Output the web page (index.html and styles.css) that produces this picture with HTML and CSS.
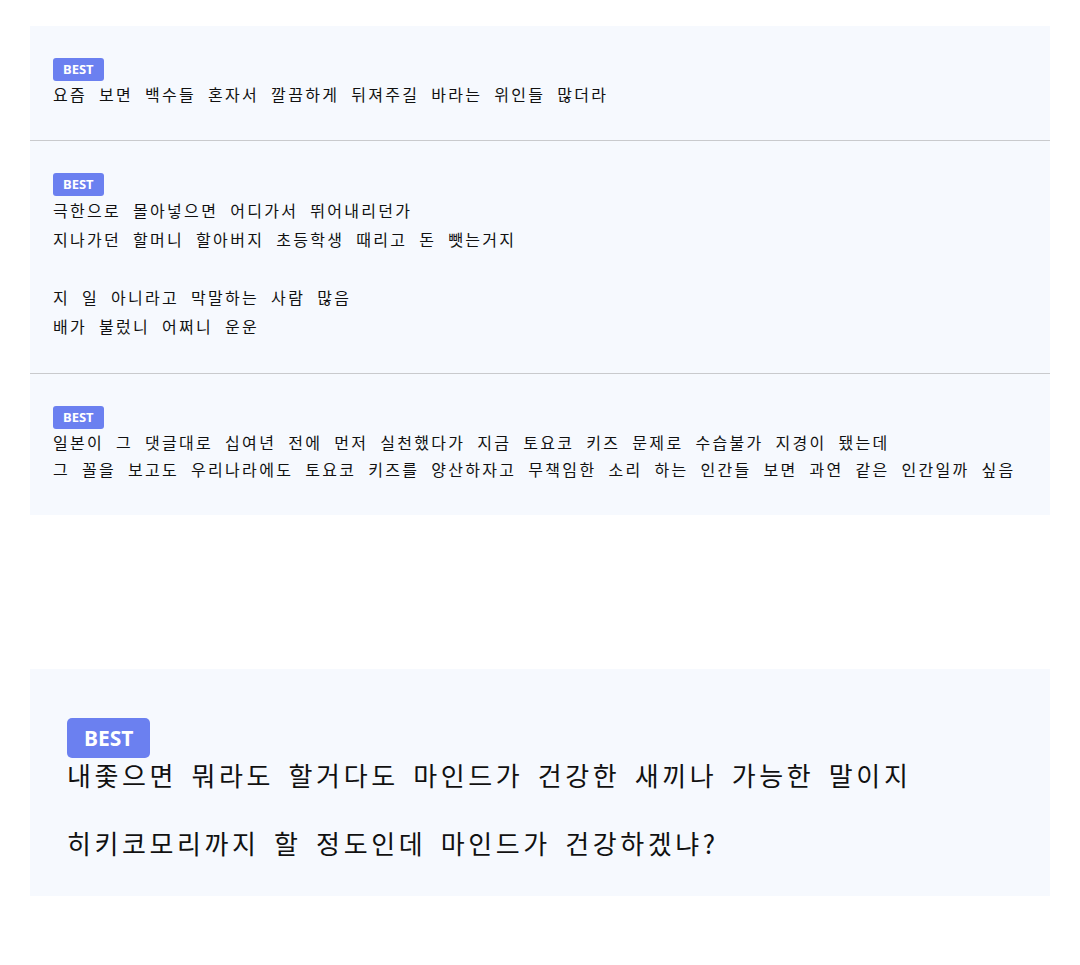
FILE: index.html
```html
<!DOCTYPE html>
<html lang="ko">
<head>
<meta charset="utf-8">
<title>BEST 댓글</title>
<link rel="stylesheet" href="styles.css">
</head>
<body>
  <section class="panel">
    <article class="comment">
      <span class="badge">BEST</span>
      <p class="text">요즘 보면 백수들 혼자서 깔끔하게 뒤져주길 바라는 위인들 많더라</p>
    </article>
    <article class="comment">
      <span class="badge">BEST</span>
      <p class="text text-loose">극한으로 몰아넣으면 어디가서 뛰어내리던가<br>지나가던 할머니 할아버지 초등학생 때리고 돈 뺏는거지<br><br>지 일 아니라고 막말하는 사람 많음<br>배가 불렀니 어쩌니 운운</p>
    </article>
    <article class="comment">
      <span class="badge">BEST</span>
      <p class="text">일본이 그 댓글대로 십여년 전에 먼저 실천했다가 지금 토요코 키즈 문제로 수습불가 지경이 됐는데<br>그 꼴을 보고도 우리나라에도 토요코 키즈를 양산하자고 무책임한 소리 하는 인간들 보면 과연 같은 인간일까 싶음</p>
    </article>
  </section>

  <section class="panel panel-large">
    <article class="comment comment-large">
      <span class="badge badge-large">BEST</span>
      <p class="text text-large">내좇으면 뭐라도 할거다도 마인드가 건강한 새끼나 가능한 말이지<br><br>히키코모리까지 할 정도인데 마인드가 건강하겠냐?</p>
    </article>
  </section>
</body>
</html>
```

FILE: styles.css
```css
html, body {
  margin: 0;
  padding: 0;
  background: #ffffff;
}

body {
  padding: 26px 30px 0 30px;
  font-family: "Noto Sans CJK KR", "Noto Sans", sans-serif;
  color: #111111;
}

.panel {
  background: #f6f9fe;
  display: flex;
  flex-direction: column;
}

.panel-large {
  margin-top: 154px;
}

.comment {
  padding: 32px 23px 32px 23px;
  display: flex;
  flex-direction: column;
  align-items: flex-start;
}

.comment + .comment {
  border-top: 1px solid #c9cacd;
}

.badge {
  display: inline-block;
  height: 23px;
  line-height: 23px;
  padding: 0 10px;
  border-radius: 3px;
  background: #6b80f0;
  color: #ffffff;
  font-family: "Noto Sans", "Open Sans", sans-serif;
  font-weight: 700;
  font-size: 13px;
  letter-spacing: 0;
}

.text {
  margin: 0;
  font-size: 16px;
  line-height: 27px;
  letter-spacing: 2.3px;
  word-spacing: 5.2px;
  color: #111111;
}

.text-loose {
  line-height: 29px;
}

.comment-large {
  padding: 49px 37px 36px 37px;
}

.badge-large {
  height: 40px;
  line-height: 40px;
  padding: 0 17px;
  border-radius: 5px;
  font-size: 21px;
}

.text-large {
  font-size: 26px;
  line-height: 34px;
  letter-spacing: 3.6px;
  word-spacing: 3.6px;
}
```
